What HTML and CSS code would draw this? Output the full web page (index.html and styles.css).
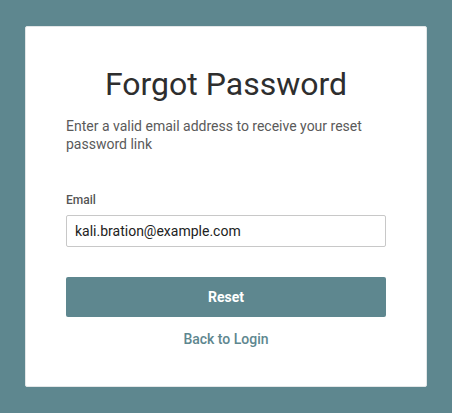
FILE: index.html
```html
<!DOCTYPE html>
<html lang="en">
<head>
<meta charset="utf-8">
<title>Forgot Password</title>
<link rel="stylesheet" href="styles.css">
</head>
<body>
<main class="page">
  <form class="card">
    <h1 class="title">Forgot Password</h1>
    <p class="desc">Enter a valid email address to receive your reset password link</p>
    <label class="label" for="email">Email</label>
    <input class="input" id="email" type="email" value="kali.bration@example.com">
    <button class="btn" type="button">Reset</button>
    <a class="back" href="#">Back to Login</a>
  </form>
</main>
</body>
</html>
```
FILE: styles.css
```css
* { box-sizing: border-box; }
html, body { margin: 0; padding: 0; }
body {
  background: #5e878f;
  font-family: Roboto, "Liberation Sans", sans-serif;
  width: 452px;
  height: 413px;
}
.page {
  padding: 26px 0 0 25px;
}
.card {
  width: 402px;
  height: 361px;
  background: #fff;
  border: 1px solid #e2e6e7;
  border-radius: 2px;
  padding: 38px 40px 0 40px;
  display: flex;
  flex-direction: column;
}
.title {
  margin: 0;
  font-size: 32px;
  font-weight: 400;
  color: #2e2e2e;
  text-align: center;
  line-height: 38px;
}
.desc {
  margin: 14px 0 0;
  font-size: 14px;
  line-height: 18px;
  color: #5a5a5a;
}
.label {
  margin-top: 40px;
  font-size: 12px;
  font-weight: 500;
  color: #555;
  line-height: 14px;
}
.input {
  margin-top: 8px;
  height: 32px;
  width: 320px;
  border: 1px solid #c8c8c8;
  border-radius: 2px;
  padding: 0 8px;
  font-family: inherit;
  font-size: 14px;
  color: #222;
  outline: none;
}
.btn {
  margin-top: 30px;
  height: 40px;
  width: 320px;
  border: 0;
  border-radius: 2px;
  background: #5e878f;
  color: #fff;
  font-family: inherit;
  font-size: 14px;
  font-weight: 700;
}
.back {
  margin-top: 14px;
  align-self: center;
  font-size: 14px;
  font-weight: 500;
  color: #5e878f;
  text-decoration: none;
  line-height: 16px;
}
```
